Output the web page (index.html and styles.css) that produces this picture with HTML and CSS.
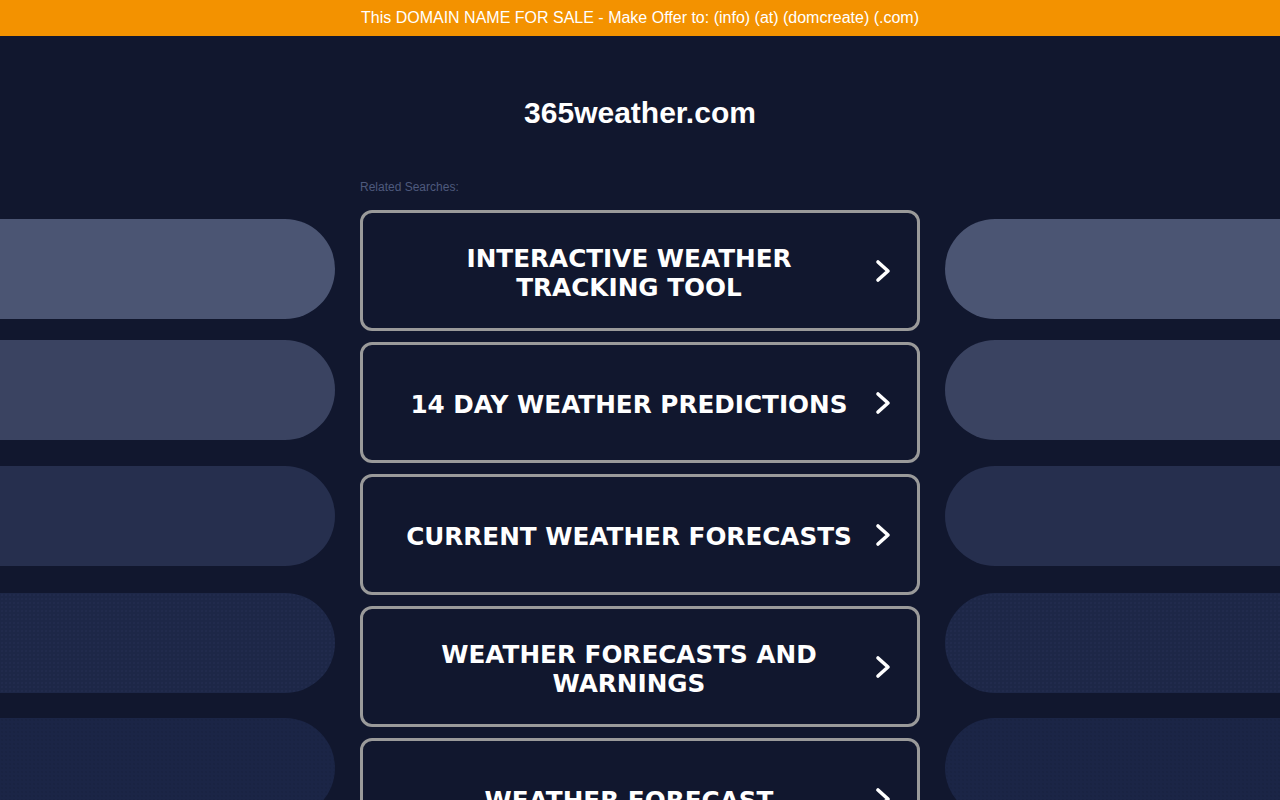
FILE: index.html
```html
<!DOCTYPE html>
<html>
<head>
<meta charset="utf-8">
<title>365weather.com</title>
<link rel="stylesheet" href="styles.css">
</head>
<body>
<div class="topbar">This DOMAIN NAME FOR SALE - Make Offer to: (info) (at) (domcreate) (.com)</div>
<h1 class="title">365weather.com</h1>
<div class="grid">
  <div class="side side-left">
    <div class="pill p1"></div>
    <div class="pill p2"></div>
    <div class="pill p3"></div>
    <div class="pill p4"></div>
    <div class="pill p5"></div>
  </div>
  <div class="center">
    <div class="related">Related Searches:</div>
    <div class="links">
      <a class="link" href="#"><span class="label">INTERACTIVE WEATHER TRACKING TOOL</span><svg class="chev" viewBox="0 0 16 24"><path d="M3 3 L13 12 L3 21"/></svg></a>
      <a class="link" href="#"><span class="label">14 DAY WEATHER PREDICTIONS</span><svg class="chev" viewBox="0 0 16 24"><path d="M3 3 L13 12 L3 21"/></svg></a>
      <a class="link" href="#"><span class="label">CURRENT WEATHER FORECASTS</span><svg class="chev" viewBox="0 0 16 24"><path d="M3 3 L13 12 L3 21"/></svg></a>
      <a class="link" href="#"><span class="label">WEATHER FORECASTS AND WARNINGS</span><svg class="chev" viewBox="0 0 16 24"><path d="M3 3 L13 12 L3 21"/></svg></a>
      <a class="link" href="#"><span class="label">WEATHER FORECAST</span><svg class="chev" viewBox="0 0 16 24"><path d="M3 3 L13 12 L3 21"/></svg></a>
    </div>
  </div>
  <div class="side side-right">
    <div class="pill p1"></div>
    <div class="pill p2"></div>
    <div class="pill p3"></div>
    <div class="pill p4"></div>
    <div class="pill p5"></div>
  </div>
</div>
</body>
</html>
```
FILE: styles.css
```css
html, body {
  margin: 0;
  padding: 0;
  background: #11172e;
  height: 800px;
  overflow: hidden;
}
body {
  font-family: "Liberation Sans", Arial, sans-serif;
  color: #fff;
}
.topbar {
  height: 36px;
  line-height: 35px;
  background: #f39200;
  color: #fff;
  font-size: 16px;
  text-align: center;
}
.title {
  margin: 59px 0 0;
  font-size: 30px;
  line-height: 36px;
  font-weight: bold;
  text-align: center;
  color: #fff;
}
.grid {
  display: grid;
  grid-template-columns: 335px 560px 335px;
  column-gap: 25px;
  margin-top: 49px;
}
.side {
  display: flex;
  flex-direction: column;
  padding-top: 39px;
}
.pill {
  height: 100px;
  flex: none;
}
.side-left .pill { border-radius: 0 50px 50px 0; }
.side-right .pill { border-radius: 50px 0 0 50px; }
.p1 { background: #4b5573; }
.p2 { background: #3a4361; margin-top: 21px; }
.p3 { background: #262f4e; margin-top: 26px; }
.p4 {
  background-color: #1d2747;
  background-image: radial-gradient(rgba(60, 75, 115, 0.18) 0.6px, transparent 0.9px);
  background-size: 4px 4px;
  margin-top: 27px;
}
.p5 {
  background-color: #1b2546;
  background-image: radial-gradient(rgba(20, 28, 55, 0.35) 0.6px, transparent 0.9px);
  background-size: 4px 4px;
  margin-top: 25px;
}
.related {
  font-size: 12px;
  line-height: 14px;
  color: #4e5a7d;
}
.links {
  display: flex;
  flex-direction: column;
  gap: 11px;
  margin-top: 16px;
}
.link {
  box-sizing: border-box;
  height: 121px;
  border: 3px solid #9a9a9a;
  border-radius: 12px;
  display: flex;
  align-items: center;
  text-decoration: none;
  color: #fff;
  padding: 0 26px 0 20px;
}
.label {
  flex: 1;
  text-align: center;
  font-family: "DejaVu Sans", Verdana, sans-serif;
  font-weight: bold;
  font-size: 24.7px;
  line-height: 29px;
  padding: 4px 14px 0;
}
.chev {
  width: 16px;
  height: 24px;
  flex: none;
}
.chev path {
  fill: none;
  stroke: #fff;
  stroke-width: 3.6;
  stroke-linecap: round;
  stroke-linejoin: round;
}
```
